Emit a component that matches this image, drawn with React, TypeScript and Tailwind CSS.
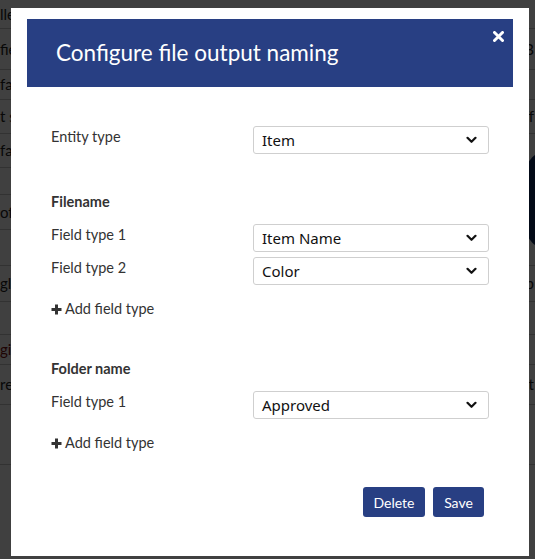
import type { ReactNode } from "react";

type Row = { h: number; left: string; right: string; leftRed?: boolean };

// page behind the dimmed overlay, only slivers of it show at the edges
const backRows: Row[] = [
  { h: 29, left: "lle", right: "" },
  { h: 41, left: "fie", right: "B" },
  { h: 30, left: "fa", right: "" },
  { h: 34, left: "t s", right: "ff" },
  { h: 34, left: "fa", right: "" },
  { h: 27, left: "", right: "" },
  { h: 35, left: "of", right: "" },
  { h: 36, left: "", right: "" },
  { h: 36, left: "glis", right: "p" },
  { h: 33, left: "", right: "" },
  { h: 30, left: "gi", right: "", leftRed: true },
  { h: 40, left: "re", right: "t" },
  { h: 60, left: "", right: "" },
];

function Chevron() {
  return (
    <svg width="11" height="8" viewBox="0 0 11 8" className="shrink-0">
      <path d="M1.5 1.8 L5.5 5.8 L9.5 1.8" fill="none" stroke="#111" strokeWidth="2.2" strokeLinecap="round" strokeLinejoin="round" />
    </svg>
  );
}

function FakeSelect({ value }: { value: string }) {
  return (
    <div className="flex h-[28px] items-center justify-between rounded-[3px] border border-[#cfcfcf] bg-white pl-[8px] pr-[11px] text-[15px] text-[#111] [font-family:'Noto_Sans',sans-serif]">
      <span className="leading-none">{value}</span>
      <Chevron />
    </div>
  );
}

function FieldRow({ label, value }: { label: string; value: string }) {
  return (
    <div className="grid grid-cols-[202px_236px]">
      <span className="text-[14.5px] leading-[22px] text-[#333]">{label}</span>
      <FakeSelect value={value} />
    </div>
  );
}

function Heading({ children }: { children: ReactNode }) {
  return <p className="text-[14.5px] font-bold leading-5 text-[#333]">{children}</p>;
}

function AddFieldType() {
  return (
    <button className="flex h-5 items-center gap-[3px] text-[14.5px] leading-5 text-[#333]">
      <svg width="11" height="11" viewBox="0 0 11 11">
        <path d="M5.5 0.5 V10.5 M0.5 5.5 H10.5" stroke="#333" strokeWidth="3" />
      </svg>
      <span>Add field type</span>
    </button>
  );
}

export default function App() {
  return (
    <div className="relative h-[559px] w-full overflow-hidden bg-white [font-family:Lato,'Open_Sans',sans-serif]">
      <div className="flex flex-col">
        {backRows.map((row, i) => (
          <div
            key={i}
            className="flex items-center justify-between border-b border-[#c8c8c8] text-[15px] text-[#222]"
            style={{ height: row.h }}
          >
            <span className={row.leftRed ? "text-[#7a1010]" : ""}>{row.left}</span>
            <span className="pr-[1px]">{row.right}</span>
          </div>
        ))}
      </div>
      <div className="absolute right-[-40px] top-[150px] h-[100px] w-[50px] rounded-full bg-[#0d2a5c]" />

      <div className="absolute inset-0 bg-black/75" />

      <div className="absolute left-[11px] top-[8px] flex h-[548px] w-[518px] flex-col bg-white px-[16px] pt-[11px]">
        <div className="relative flex h-[68px] shrink-0 items-center bg-[#283f83] pl-[29px]">
          <h1 className="text-[22.5px] leading-none text-white">Configure file output naming</h1>
          <button className="absolute right-[9px] top-[12px]" aria-label="Close">
            <svg width="11" height="11" viewBox="0 0 11 11">
              <path d="M1.5 1.5 L9.5 9.5 M9.5 1.5 L1.5 9.5" stroke="#fff" strokeWidth="3" strokeLinecap="round" />
            </svg>
          </button>
        </div>

        <div className="flex flex-col px-[24px] pt-[39px]">
          <FieldRow label="Entity type" value="Item" />

          <div className="mt-[38px]">
            <Heading>Filename</Heading>
          </div>
          <div className="mt-[12px] flex flex-col gap-[5px]">
            <FieldRow label="Field type 1" value="Item Name" />
            <FieldRow label="Field type 2" value="Color" />
          </div>
          <div className="mt-[14px]">
            <AddFieldType />
          </div>

          <div className="mt-[40px]">
            <Heading>Folder name</Heading>
          </div>
          <div className="mt-[12px]">
            <FieldRow label="Field type 1" value="Approved" />
          </div>
          <div className="mt-[14px]">
            <AddFieldType />
          </div>

          <div className="mt-[34px] flex justify-end gap-[8px] pr-[5px]">
            <button className="h-[30px] w-[62px] rounded-[3px] bg-[#283f83] text-[14px] text-white">Delete</button>
            <button className="h-[30px] w-[51px] rounded-[3px] bg-[#283f83] text-[14px] text-white">Save</button>
          </div>
        </div>
      </div>
    </div>
  );
}
